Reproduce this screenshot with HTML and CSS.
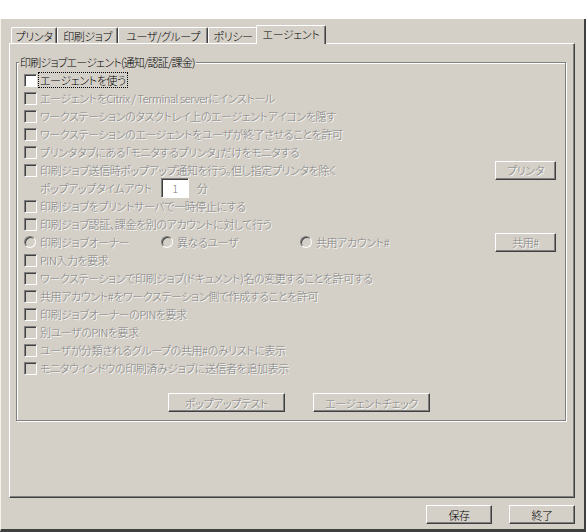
FILE: index.html
```html
<!DOCTYPE html>
<html lang="ja">
<head>
<meta charset="utf-8">
<title>エージェント設定</title>
<link rel="stylesheet" href="styles.css">
</head>
<body>
<div class="window">
  <div class="tabctl">
    <div class="tabs">
      <div class="tab t1">プリンタ</div>
      <div class="tab t2">印刷ジョブ</div>
      <div class="tab t3">ユーザ/グループ</div>
      <div class="tab t4">ポリシー</div>
      <div class="tab sel">エージェント</div>
    </div>
    <div class="panel">
      <div class="group">
        <span class="gtitle">印刷ジョブエージェント(通知/認証/課金)</span>
        <div class="row"><span class="cb on"></span><span class="lbl focus">エージェントを使う</span></div>
        <div class="row"><span class="cb"></span><span class="lbl dis">エージェントをCitrix / Terminal serverにインストール</span></div>
        <div class="row"><span class="cb"></span><span class="lbl dis">ワークステーションのタスクトレイ上のエージェントアイコンを隠す</span></div>
        <div class="row"><span class="cb"></span><span class="lbl dis">ワークステーションのエージェントをユーザが終了させることを許可</span></div>
        <div class="row"><span class="cb"></span><span class="lbl dis">プリンタタブにある「モニタするプリンタ」だけをモニタする</span></div>
        <div class="row"><span class="cb"></span><span class="lbl dis">印刷ジョブ送信時ポップアップ通知を行う。但し指定プリンタを除く</span><span class="btn dis small push">プリンタ</span></div>
        <div class="row indent"><span class="lbl dis tlabel">ポップアップタイムアウト</span><span class="edit"><span class="dis">1</span></span><span class="lbl dis unit">分</span></div>
        <div class="row"><span class="cb"></span><span class="lbl dis">印刷ジョブをプリントサーバで一時停止にする</span></div>
        <div class="row"><span class="cb"></span><span class="lbl dis">印刷ジョブ認証、課金を別のアカウントに対して行う</span></div>
        <div class="row">
          <span class="ritem r1"><span class="rb"></span><span class="lbl dis">印刷ジョブオーナー</span></span>
          <span class="ritem r2"><span class="rb"></span><span class="lbl dis">異なるユーザ</span></span>
          <span class="ritem"><span class="rb"></span><span class="lbl dis">共用アカウント#</span></span>
          <span class="btn dis small push">共用#</span>
        </div>
        <div class="row"><span class="cb"></span><span class="lbl dis">PIN入力を要求</span></div>
        <div class="row"><span class="cb"></span><span class="lbl dis">ワークステーションで印刷ジョブ(ドキュメント)名の変更することを許可する</span></div>
        <div class="row"><span class="cb"></span><span class="lbl dis">共用アカウント#をワークステーション側で作成することを許可</span></div>
        <div class="row"><span class="cb"></span><span class="lbl dis">印刷ジョブオーナーのPINを要求</span></div>
        <div class="row"><span class="cb"></span><span class="lbl dis">別ユーザのPINを要求</span></div>
        <div class="row"><span class="cb"></span><span class="lbl dis">ユーザが分類されるグループの共用#のみリストに表示</span></div>
        <div class="row"><span class="cb"></span><span class="lbl dis">モニタウインドウの印刷済みジョブに送信者を追加表示</span></div>
        <div class="btnrow">
          <span class="btn dis wide">ポップアップテスト</span>
          <span class="btn dis wide">エージェントチェック</span>
        </div>
      </div>
    </div>
  </div>
  <div class="footer">
    <span class="btn foot">保存</span>
    <span class="btn foot">終了</span>
  </div>
</div>
</body>
</html>
```
FILE: styles.css
```css
html, body {
  margin: 0;
  padding: 0;
  background: #ffffff;
}
body {
  font-family: "Noto Sans CJK JP", "Noto Sans", sans-serif;
  font-size: 11px;
  font-weight: 300;
  letter-spacing: -0.4px;
  font-feature-settings: "palt";
  color: #000;
}
.window {
  margin-top: 19px;
  width: 586px;
  height: 513px;
  box-sizing: border-box;
  background: #d4d0c8;
  border-left: 1px solid #f4f3ef;
  border-right: 2px solid #404040;
  border-bottom: 3px solid #404040;
  padding: 6px 9px 0 8px;
  display: flex;
  flex-direction: column;
}
.tabs {
  display: flex;
  align-items: flex-end;
  height: 18px;
  padding-left: 2px;
}
.tab {
  box-sizing: border-box;
  height: 16px;
  border-top: 1px solid #fff;
  border-left: 1px solid #fff;
  border-right: 1px solid #404040;
  box-shadow: inset -1px 0 0 #808080;
  border-top-left-radius: 2px;
  border-top-right-radius: 2px;
  display: flex;
  align-items: center;
  justify-content: center;
  line-height: 14px;
  white-space: nowrap;
  background: #d4d0c8;
}
.t1 { width: 46px; }
.t2 { width: 61px; }
.t3 { width: 90px; }
.t4 { width: 50px; }
.tab.sel {
  width: 70px;
  height: 19px;
  margin-left: -2px;
  margin-bottom: -1px;
  position: relative;
  z-index: 1;
  padding-bottom: 2px;
}
.panel {
  box-sizing: border-box;
  height: 455px;
  border-top: 1px solid #fff;
  border-left: 1px solid #fff;
  border-right: 1px solid #404040;
  border-bottom: 1px solid #404040;
  box-shadow: inset -1px -1px 0 #808080;
  padding: 18px 6px 0 6px;
}
.group {
  position: relative;
  box-sizing: border-box;
  width: 550px;
  height: 359px;
  border: 1px solid #808080;
  box-shadow: inset 1px 1px 0 #fff, 1px 1px 0 #fff;
  padding: 8px 9px 0 7px;
}
.gtitle {
  position: absolute;
  top: -8px;
  left: 2px;
  padding: 0 1px;
  background: #d4d0c8;
  line-height: 14px;
  letter-spacing: -0.8px;
  white-space: nowrap;
}
.row {
  display: flex;
  align-items: center;
  height: 18px;
  white-space: nowrap;
}
.lbl {
  line-height: 14px;
}
.dis {
  color: #808080;
  text-shadow: 1px 1px 0 #fff;
}
.focus {
  outline: 1px dotted #000;
  outline-offset: 0;
  padding: 0 1px;
  margin-left: -1px;
}
.cb {
  box-sizing: border-box;
  width: 13px;
  height: 13px;
  margin-right: 3px;
  flex: none;
  border-top: 1px solid #808080;
  border-left: 1px solid #808080;
  border-right: 1px solid #fff;
  border-bottom: 1px solid #fff;
  box-shadow: inset 1px 1px 0 #404040;
  background: #d4d0c8;
}
.cb.on {
  background: #fff;
}
.indent {
  padding-left: 16px;
}
.tlabel {
  width: 121px;
  flex: none;
}
.edit {
  box-sizing: border-box;
  width: 28px;
  height: 20px;
  flex: none;
  border-top: 1px solid #808080;
  border-left: 1px solid #808080;
  border-right: 1px solid #fff;
  border-bottom: 1px solid #fff;
  box-shadow: inset 1px 1px 0 #404040;
  background: #fff;
  display: flex;
  align-items: center;
  justify-content: center;
  line-height: 14px;
}
.unit {
  margin-left: 8px;
}
.ritem {
  display: flex;
  align-items: center;
}
.r1 { width: 137px; }
.r2 { width: 139px; }
.rb {
  box-sizing: border-box;
  width: 12px;
  height: 12px;
  margin-right: 4px;
  flex: none;
  border-radius: 50%;
  border: 1px solid;
  border-color: #808080 #fff #fff #808080;
  box-shadow: inset 1px 1px 0 #404040;
  background: #d4d0c8;
}
.btn {
  box-sizing: border-box;
  display: flex;
  align-items: center;
  justify-content: center;
  height: 19px;
  border-top: 1px solid #fff;
  border-left: 1px solid #fff;
  border-right: 1px solid #404040;
  border-bottom: 1px solid #404040;
  box-shadow: inset -1px -1px 0 #808080;
  background: #d4d0c8;
  line-height: 14px;
  white-space: nowrap;
}
.small {
  width: 61px;
}
.push {
  margin-left: auto;
}
.btnrow {
  display: flex;
  gap: 28px;
  margin-top: 16px;
  padding-left: 144px;
}
.wide {
  width: 117px;
}
.footer {
  display: flex;
  justify-content: flex-end;
  gap: 17px;
  margin-top: 7px;
}
.foot {
  width: 66px;
}
```
